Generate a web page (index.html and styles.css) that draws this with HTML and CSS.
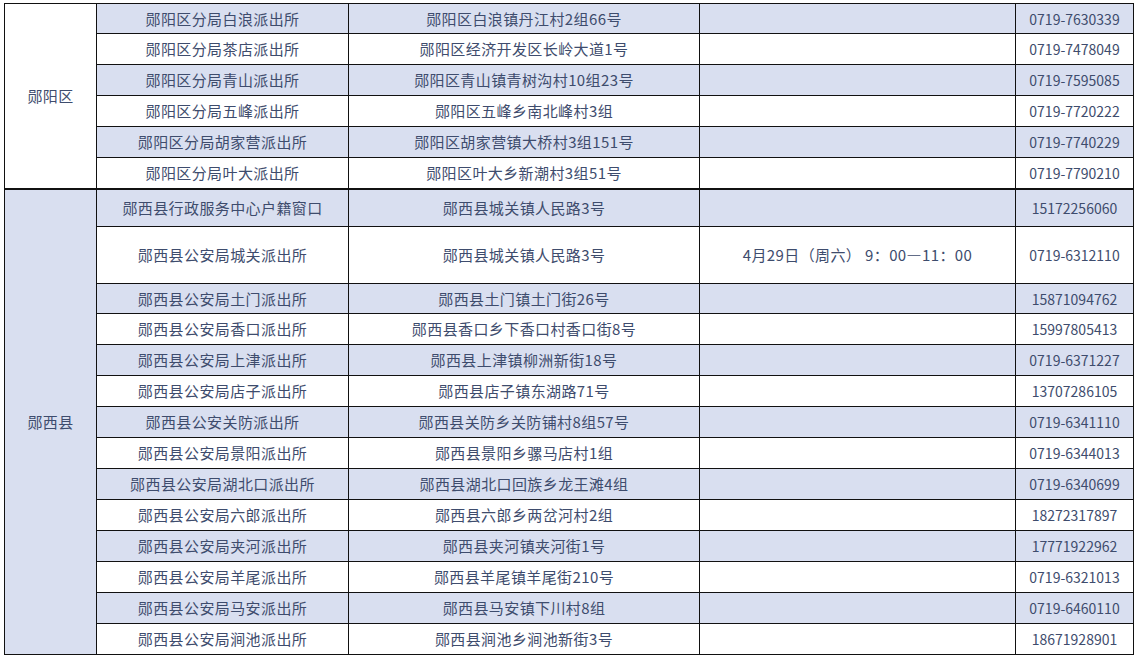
FILE: index.html
```html
<!DOCTYPE html>
<html lang="zh-CN">
<head>
<meta charset="utf-8">
<title>户籍窗口</title>
<link rel="stylesheet" href="styles.css">
</head>
<body>
<table class="grid">
  <colgroup>
    <col class="c-area"><col class="c-name"><col class="c-addr"><col class="c-time"><col class="c-tel">
  </colgroup>
  <tbody>
    <tr class="alt top">
      <td class="area" rowspan="6">郧阳区</td>
      <td>郧阳区分局白浪派出所</td><td>郧阳区白浪镇丹江村2组66号</td><td></td><td class="tel">0719-7630339</td>
    </tr>
    <tr><td>郧阳区分局茶店派出所</td><td>郧阳区经济开发区长岭大道1号</td><td></td><td class="tel">0719-7478049</td></tr>
    <tr class="alt"><td>郧阳区分局青山派出所</td><td>郧阳区青山镇青树沟村10组23号</td><td></td><td class="tel">0719-7595085</td></tr>
    <tr><td>郧阳区分局五峰派出所</td><td>郧阳区五峰乡南北峰村3组</td><td></td><td class="tel">0719-7720222</td></tr>
    <tr class="alt"><td>郧阳区分局胡家营派出所</td><td>郧阳区胡家营镇大桥村3组151号</td><td></td><td class="tel">0719-7740229</td></tr>
    <tr><td>郧阳区分局叶大派出所</td><td>郧阳区叶大乡新潮村3组51号</td><td></td><td class="tel">0719-7790210</td></tr>

    <tr class="alt first tall">
      <td class="area shade" rowspan="14">郧西县</td>
      <td>郧西县行政服务中心户籍窗口</td><td>郧西县城关镇人民路3号</td><td></td><td class="tel">15172256060</td>
    </tr>
    <tr class="taller"><td>郧西县公安局城关派出所</td><td>郧西县城关镇人民路3号</td><td>4月29日（周六） 9：00—11：00</td><td class="tel">0719-6312110</td></tr>
    <tr class="alt short"><td>郧西县公安局土门派出所</td><td>郧西县土门镇土门街26号</td><td></td><td class="tel">15871094762</td></tr>
    <tr><td>郧西县公安局香口派出所</td><td>郧西县香口乡下香口村香口街8号</td><td></td><td class="tel">15997805413</td></tr>
    <tr class="alt"><td>郧西县公安局上津派出所</td><td>郧西县上津镇柳洲新街18号</td><td></td><td class="tel">0719-6371227</td></tr>
    <tr><td>郧西县公安局店子派出所</td><td>郧西县店子镇东湖路71号</td><td></td><td class="tel">13707286105</td></tr>
    <tr class="alt"><td>郧西县公安关防派出所</td><td>郧西县关防乡关防铺村8组57号</td><td></td><td class="tel">0719-6341110</td></tr>
    <tr><td>郧西县公安局景阳派出所</td><td>郧西县景阳乡骡马店村1组</td><td></td><td class="tel">0719-6344013</td></tr>
    <tr class="alt"><td>郧西县公安局湖北口派出所</td><td>郧西县湖北口回族乡龙王滩4组</td><td></td><td class="tel">0719-6340699</td></tr>
    <tr><td>郧西县公安局六郎派出所</td><td>郧西县六郎乡两岔河村2组</td><td></td><td class="tel">18272317897</td></tr>
    <tr class="alt"><td>郧西县公安局夹河派出所</td><td>郧西县夹河镇夹河街1号</td><td></td><td class="tel">17771922962</td></tr>
    <tr><td>郧西县公安局羊尾派出所</td><td>郧西县羊尾镇羊尾街210号</td><td></td><td class="tel">0719-6321013</td></tr>
    <tr class="alt"><td>郧西县公安局马安派出所</td><td>郧西县马安镇下川村8组</td><td></td><td class="tel">0719-6460110</td></tr>
    <tr><td>郧西县公安局涧池派出所</td><td>郧西县涧池乡涧池新街3号</td><td></td><td class="tel">18671928901</td></tr>
  </tbody>
</table>
</body>
</html>
```
FILE: styles.css
```css
html, body {
  margin: 0;
  padding: 0;
  background: #ffffff;
}

.grid {
  margin: 3px 0 0 4px;
  width: 1130px;
  table-layout: fixed;
  border-collapse: collapse;
  font-family: "Noto Sans CJK SC", "Liberation Sans", sans-serif;
  font-size: 15px;
  font-weight: 400;
  letter-spacing: 0.4px;
  color: #3e4c6d;
}

.c-area { width: 92px; }
.c-name { width: 252px; }
.c-addr { width: 351px; }
.c-time { width: 316px; }
.c-tel  { width: 118px; }

.grid td {
  border: 1px solid #111111;
  height: 30px;
  padding: 0;
  text-align: center;
  vertical-align: middle;
  line-height: 18px;
  white-space: nowrap;
  overflow: hidden;
}

.grid tr.top td {
  height: 29px;
}

.grid tr.short td {
  height: 29px;
}

.grid tr.alt td {
  background: #d9dff0;
}

.grid td.area,
.grid tr.alt td.area {
  background: #ffffff;
}

.grid td.area.shade,
.grid tr.alt td.area.shade {
  background: #d9dff0;
}

.grid tr.first td {
  border-top: 2px solid #111111;
}

.grid tr.tall td {
  height: 36px;
}

.grid tr.taller td {
  height: 56px;
}

.grid td.tel {
  font-size: 14px;
  letter-spacing: 0;
}
```
